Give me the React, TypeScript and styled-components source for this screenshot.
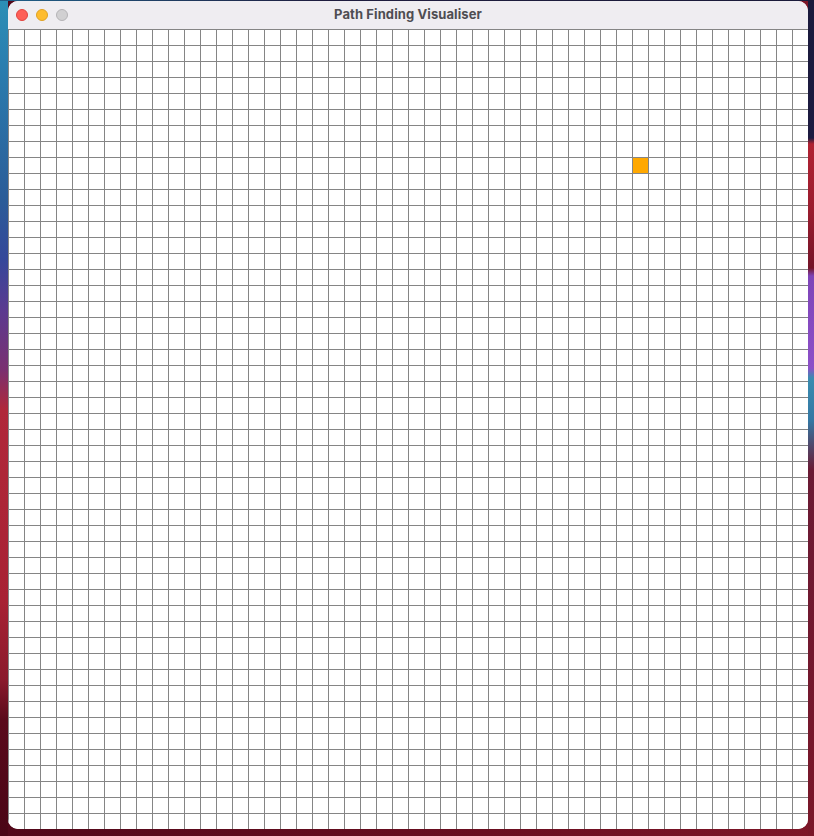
import React from "react";
import styled, { createGlobalStyle } from "styled-components";

const COLS = 50;
const ROWS = 50;
const CELL = 16;
const TARGET = { row: 8, col: 39 };

const GlobalStyle = createGlobalStyle`
  html, body {
    margin: 0;
    padding: 0;
    width: 814px;
    height: 836px;
    overflow: hidden;
  }
  * { box-sizing: border-box; }
`;

const Desktop = styled.div`
  width: 814px;
  height: 836px;
  padding: 1px 0 0 8px;
  background:
    linear-gradient(90deg, #1f5f88 0%, #1e1c3e 40%, #1a1a3a 100%) left top / 100% 1px no-repeat,
    linear-gradient(
        180deg,
        #2c8fb6 0px,
        #2a7fb0 60px,
        #2b5c98 200px,
        #35479a 260px,
        #5b3a90 310px,
        #7a3070 370px,
        #b0283a 410px,
        #a82234 600px,
        #8a1a2c 680px,
        #5a0a1c 720px,
        #4a0616 836px
      )
      left top / 8px 100% no-repeat,
    linear-gradient(
        180deg,
        #1a1a3c 0px,
        #1c1a40 138px,
        #b02232 144px,
        #9a1c2e 210px,
        #741428 268px,
        #7e44b8 276px,
        #8c50c8 368px,
        #3a8cb0 378px,
        #3478a4 420px,
        #6a1a34 470px,
        #7a1628 836px
      )
      right top / 6px 100% no-repeat,
    linear-gradient(90deg, #52081a 0%, #6a0e20 60%, #7e1628 100%);
`;

const Window = styled.div`
  width: 800px;
  height: 828px;
  border-radius: 10px;
  overflow: hidden;
  background: #ffffff;
  display: flex;
  flex-direction: column;
`;

const TitleBar = styled.div`
  height: 28px;
  flex: 0 0 28px;
  background: #efedf1;
  display: grid;
  grid-template-columns: 1fr auto 1fr;
  align-items: center;
`;

const Lights = styled.div`
  display: flex;
  gap: 8px;
  align-items: center;
  padding-left: 8px;
`;

const Light = styled.span<{ $color: string; $border: string }>`
  width: 12px;
  height: 12px;
  border-radius: 50%;
  background: ${(p) => p.$color};
  border: 0.5px solid ${(p) => p.$border};
`;

const Title = styled.div`
  font-family: Inter, "Open Sans", "Liberation Sans", sans-serif;
  font-weight: 700;
  font-size: 13px;
  line-height: 16px;
  color: #4e4d52;
  letter-spacing: 0.1px;
  padding-bottom: 2px;
`;

const Board = styled.div`
  display: grid;
  grid-template-columns: repeat(${COLS}, ${CELL}px);
  grid-template-rows: repeat(${ROWS}, ${CELL}px);
`;

const Cell = styled.div<{ $kind: "empty" | "target" }>`
  width: ${CELL}px;
  height: ${CELL}px;
  border-left: 1px solid #858585;
  border-top: 1px solid #858585;
  background: ${(p) => (p.$kind === "target" ? "#ffa800" : "#ffffff")};
`;

export default function App() {
  const cells: React.ReactNode[] = [];
  for (let r = 0; r < ROWS; r++) {
    for (let c = 0; c < COLS; c++) {
      const kind = r === TARGET.row && c === TARGET.col ? "target" : "empty";
      cells.push(<Cell key={`${r}-${c}`} $kind={kind} />);
    }
  }
  return (
    <>
      <GlobalStyle />
      <Desktop>
        <Window>
          <TitleBar>
            <Lights>
              <Light $color="#fe5f57" $border="#e0443e" />
              <Light $color="#febc2e" $border="#dea123" />
              <Light $color="#d1d0d2" $border="#b4b3b6" />
            </Lights>
            <Title>Path Finding Visualiser</Title>
            <span />
          </TitleBar>
          <Board>{cells}</Board>
        </Window>
      </Desktop>
    </>
  );
}
